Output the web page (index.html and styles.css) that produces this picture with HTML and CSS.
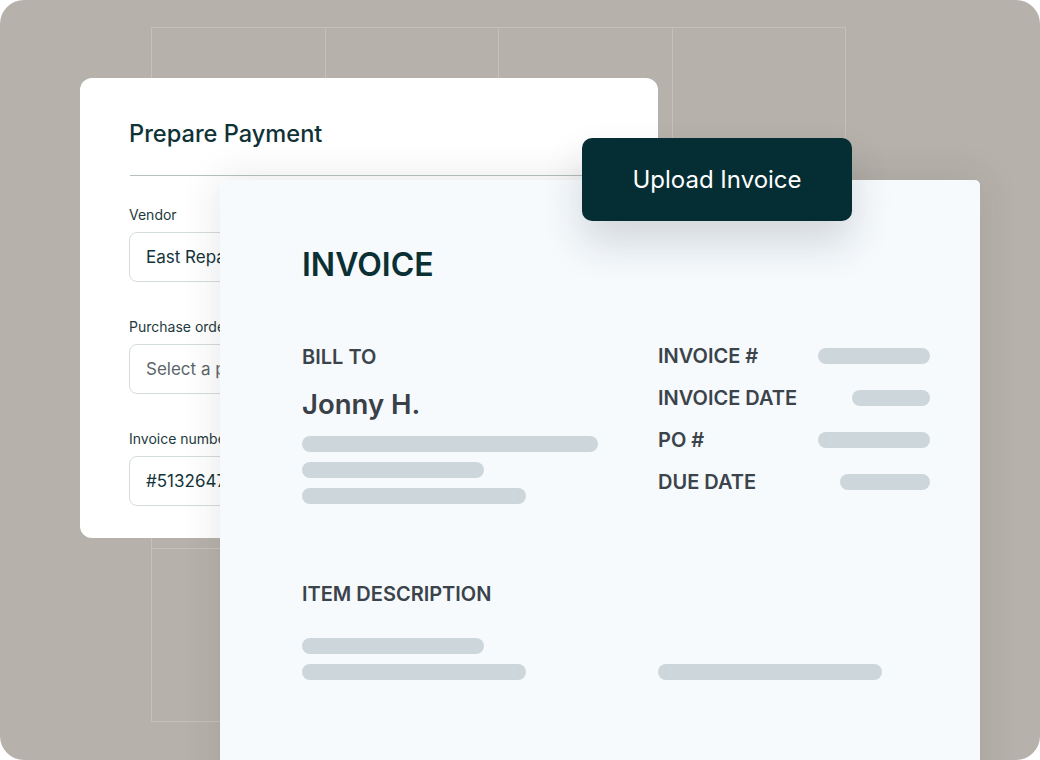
FILE: index.html
```html
<!DOCTYPE html>
<html lang="en">
<head>
    <meta charset="UTF-8">
    <meta name="viewport" content="width=device-width, initial-scale=1.0">
    <title>Upload Invoice</title>
    <link rel="stylesheet" href="styles.css">
</head>
<body>

    <div class="stage">

        <!-- background grid -->
        <div class="grid">
            <span></span><span></span><span></span><span></span>
            <span></span><span></span><span></span><span></span>
            <span></span><span></span><span></span><span></span>
            <span></span><span></span><span></span><span></span>
        </div>

        <!-- Prepare payment form -->
        <div class="card payment">
            <h2>Prepare Payment</h2>
            <hr>
            <div class="field">
                <label>Vendor</label>
                <div class="input">East Repair Inc.</div>
            </div>
            <div class="field">
                <label>Purchase order</label>
                <div class="input placeholder">Select a purchase order</div>
            </div>
            <div class="field">
                <label>Invoice number</label>
                <div class="input">#5132647</div>
            </div>
        </div>

        <!-- Invoice document -->
        <div class="card invoice">
            <h1>INVOICE</h1>

            <div class="invoice-top">
                <div class="bill-to">
                    <h3>BILL TO</h3>
                    <p class="name">Jonny H.</p>
                    <div class="bars">
                        <div class="bar" style="width: 296px"></div>
                        <div class="bar" style="width: 182px"></div>
                        <div class="bar" style="width: 224px"></div>
                    </div>
                </div>
                <div class="meta">
                    <div class="meta-row"><h3>INVOICE #</h3><div class="bar" style="width: 112px"></div></div>
                    <div class="meta-row"><h3>INVOICE DATE</h3><div class="bar" style="width: 78px"></div></div>
                    <div class="meta-row"><h3>PO #</h3><div class="bar" style="width: 112px"></div></div>
                    <div class="meta-row"><h3>DUE DATE</h3><div class="bar" style="width: 90px"></div></div>
                </div>
            </div>

            <h3 class="items-title">ITEM DESCRIPTION</h3>
            <div class="items">
                <div class="bars">
                    <div class="bar" style="width: 182px"></div>
                    <div class="bar" style="width: 224px"></div>
                </div>
                <div class="bars">
                    <div class="bar" style="width: 224px"></div>
                </div>
            </div>
        </div>

        <button class="upload-btn">Upload Invoice</button>
    </div>

</body>
</html>
```

FILE: styles.css
```css
body {
    font-family: Inter, "Noto Sans", sans-serif;
    background-color: white;
    margin: 0;
    padding: 0;
}
.stage {
    position: relative;
    width: 1040px;
    height: 760px;
    background-color: #b6b2ab;
    border-radius: 24px;
    overflow: hidden;
}
.grid {
    position: absolute;
    left: 151px;
    top: 27px;
    width: 694px;
    height: 694px;
    display: grid;
    grid-template-columns: repeat(4, 1fr);
    grid-template-rows: repeat(4, 1fr);
    border-left: 1.5px solid #c5c1ba;
    border-top: 1.5px solid #c5c1ba;
}
.grid span {
    border-right: 1.5px solid #c5c1ba;
    border-bottom: 1.5px solid #c5c1ba;
}
.card {
    position: absolute;
    box-sizing: border-box;
}

/* Prepare payment */
.payment {
    left: 80px;
    top: 78px;
    width: 578px;
    height: 460px;
    background: white;
    border-radius: 12px;
    padding: 41px 48px 0 49px;
}
.payment h2 {
    font-size: 23.6px;
    line-height: 30px;
    font-weight: 500;
    color: #0f3236;
    margin: 0;
}
.payment hr {
    border: none;
    border-top: 1px solid #b8c0c0;
    margin: 26px 0 29px 1px;
}
.field {
    margin-bottom: 35px;
}
.field label {
    display: block;
    font-size: 14px;
    line-height: 20px;
    color: #1e3a3d;
    margin-bottom: 7px;
}
.input {
    height: 50px;
    box-sizing: border-box;
    border: 1px solid #d5dcdc;
    border-radius: 8px;
    padding-left: 16px;
    display: flex;
    align-items: center;
    font-size: 17px;
    color: #133439;
}
.input.placeholder {
    color: #5c666b;
}

/* Invoice */
.invoice {
    left: 220px;
    top: 180px;
    width: 760px;
    height: 620px;
    background: #f6fafd;
    border-radius: 5px;
    padding: 65px 50px 0 82px;
    box-shadow: 0 0 40px rgba(40, 40, 40, 0.12);
}
.invoice h1 {
    font-size: 32px;
    line-height: 40px;
    font-weight: 600;
    color: #0b3034;
    margin: 0 0 59px;
}
.invoice h3 {
    font-size: 20px;
    line-height: 24px;
    font-weight: 600;
    color: #3b434b;
    margin: 0;
}
.invoice-top {
    display: flex;
}
.bill-to {
    width: 356px;
    padding-top: 1px;
}
.name {
    font-size: 27.5px;
    line-height: 34px;
    font-weight: 600;
    color: #3a4048;
    margin: 18px 0 15px;
}
.bars {
    display: flex;
    flex-direction: column;
    gap: 10px;
}
.bar {
    height: 16px;
    border-radius: 8px;
    background: #cdd7db;
}
.meta {
    flex: 1;
    display: flex;
    flex-direction: column;
    gap: 18px;
}
.meta-row {
    display: flex;
    align-items: center;
    justify-content: space-between;
}
.invoice .items-title {
    margin-top: 78px;
}
.items {
    display: grid;
    grid-template-columns: 356px 1fr;
    align-items: end;
    margin-top: 32px;
}

.upload-btn {
    position: absolute;
    left: 582px;
    top: 138px;
    width: 270px;
    height: 83px;
    border: none;
    border-radius: 10px;
    background: #042e33;
    color: white;
    font-family: Inter, "Noto Sans", sans-serif;
    font-size: 24px;
    cursor: pointer;
    box-shadow: 0 22px 40px rgba(30, 40, 45, 0.16);
}
```
